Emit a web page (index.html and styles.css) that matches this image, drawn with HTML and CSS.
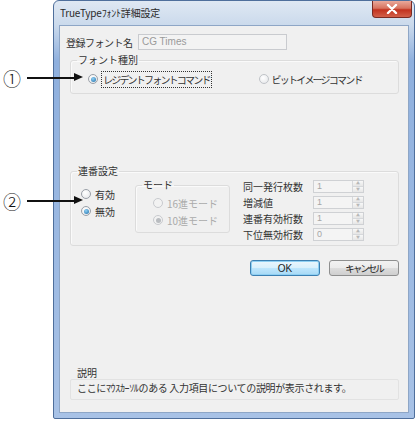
FILE: index.html
```html
<!DOCTYPE html>
<html lang="ja">
<head>
<meta charset="utf-8">
<title>TrueTypeフォント詳細設定</title>
<link rel="stylesheet" href="styles.css">
</head>
<body>
<div class="page">
  <div class="window">
    <div class="titlebar">
      <span class="title">TrueTypeﾌｫﾝﾄ詳細設定</span>
      <span class="close"><svg width="12" height="10" viewBox="0 0 12 10"><path d="M2 1 L10 9 M10 1 L2 9" stroke="#fff" stroke-width="2.4" stroke-linecap="round"/></svg></span>
    </div>
    <div class="client">
      <div class="name-row">
        <span class="lbl name-lbl">登録フォント名</span>
        <span class="textbox">CG Times</span>
      </div>

      <fieldset class="group g-type">
        <legend>フォント種別</legend>
        <div class="type-row">
          <label class="radio on"><span class="dot"></span><span class="focus kana">レジデントフォントコマンド</span></label>
          <label class="radio off dis2"><span class="dot"></span><span class="kana">ビットイメージコマンド</span></label>
        </div>
      </fieldset>

      <fieldset class="group g-serial">
        <legend>連番設定</legend>
        <div class="serial-row">
          <div class="onoff">
            <label class="radio off"><span class="dot"></span><span>有効</span></label>
            <label class="radio on"><span class="dot"></span><span>無効</span></label>
          </div>
          <fieldset class="group g-mode">
            <legend>モード</legend>
            <label class="radio dis"><span class="dot"></span><span>16進モード</span></label>
            <label class="radio dis sel"><span class="dot"></span><span>10進モード</span></label>
          </fieldset>
          <div class="params">
            <span class="plbl">同一発行枚数</span><span class="spin"><span class="val">1</span><span class="arrows"><i>▲</i><i>▼</i></span></span>
            <span class="plbl">増減値</span><span class="spin"><span class="val">1</span><span class="arrows"><i>▲</i><i>▼</i></span></span>
            <span class="plbl">連番有効桁数</span><span class="spin"><span class="val">1</span><span class="arrows"><i>▲</i><i>▼</i></span></span>
            <span class="plbl">下位無効桁数</span><span class="spin"><span class="val">0</span><span class="arrows"><i>▲</i><i>▼</i></span></span>
          </div>
        </div>
      </fieldset>

      <div class="buttons">
        <span class="btn ok">OK</span>
        <span class="btn cancel">キャンセル</span>
      </div>

      <div class="desc-lbl">説明</div>
      <div class="desc">ここにﾏｳｽｶｰｿﾙのある 入力項目についての説明が表示されます。</div>
    </div>
  </div>

  <div class="callout c1"><span class="num">①</span><span class="arrow"></span></div>
  <div class="callout c2"><span class="num">②</span><span class="arrow"></span></div>
</div>
</body>
</html>
```
FILE: styles.css
```css
* { box-sizing: border-box; }
html, body { margin: 0; padding: 0; background: #fff; }
body {
  font-family: "Noto Sans CJK JP", "Noto Sans", sans-serif;
  font-size: 10px;
  color: #333;
}
.page { position: relative; width: 418px; height: 423px; }

.window {
  margin-left: 53px;
  width: 362px;
  height: 419px;
  border: 1px solid #4f6f9c;
  border-radius: 6px 6px 2px 2px;
  background: linear-gradient(to bottom, #dfe8f3 0, #cbdaec 24px, #8fb0de 60px, #a8c2e6 100%);
  padding: 0 5px 5px 5px;
  display: flex;
  flex-direction: column;
}
.titlebar {
  height: 24px;
  display: flex;
  align-items: flex-start;
  justify-content: space-between;
  flex: none;
}
.title {
  margin-top: 5px;
  margin-left: 1px;
  font-size: 10px;
  line-height: 14px;
  color: #2a2a2a;
  letter-spacing: -0.2px;
}
.close {
  width: 40px;
  height: 17px;
  margin-right: -3px;
  border: 1px solid #7a2a22;
  border-top: none;
  border-radius: 0 0 4px 4px;
  background: linear-gradient(to bottom, #e9a99b 0, #d7735f 45%, #c2321f 55%, #d2604a 100%);
  display: flex;
  align-items: center;
  justify-content: center;
}
.client {
  flex: 1;
  background: #f0f0f0;
  border: 1px solid #8ea6c6;
  padding: 0 9px 0 6px;
  display: flex;
  flex-direction: column;
}

.name-row {
  margin-top: 8px;
  height: 16px;
  display: flex;
  align-items: center;
}
.name-lbl { width: 72px; letter-spacing: -0.5px; }
.textbox {
  width: 149px;
  height: 16px;
  border: 1px solid #c9cbcf;
  background: #f3f3f3;
  color: #9a9a9a;
  padding-left: 3px;
  line-height: 14px;
  font-family: "Liberation Sans", "Noto Sans", sans-serif;
}

.group {
  margin: 0 0 0 4px;
  border: 1px solid #dcdcdc;
  border-radius: 3px;
  padding: 0 6px 0 6px;
  min-width: 0;
  box-shadow: inset 1px 1px 0 #fafafa;
}
.group legend {
  padding: 0 1px;
  line-height: 12px;
  font-size: 10px;
}
.g-type { margin-top: 4px; height: 40px; }
.type-row { display: flex; align-items: center; margin-top: 6px; height: 14px; }
.kana { letter-spacing: -1.8px; }

.radio { display: flex; align-items: center; height: 14px; }
.dot {
  width: 10px; height: 10px;
  border-radius: 50%;
  border: 1px solid #9aa0a8;
  background: radial-gradient(circle at 40% 35%, #ffffff, #e2e4e7);
  margin-right: 4px;
  flex: none;
  display: flex; align-items: center; justify-content: center;
}
.radio.on .dot::after {
  content: "";
  width: 5px; height: 5px; border-radius: 50%;
  background: radial-gradient(circle at 40% 35%, #8fd0f5, #1f6ea8);
}
.g-type .radio.on { margin-left: 11px; }
.focus { outline: 1px dotted #333; outline-offset: 0; padding: 0 1px; }
.g-type .radio.off { margin-left: 48px; }
.g-type .radio.off .dot { margin-right: 3px; border-color: #c0c3c8; }

.g-serial { margin-top: 71px; }
.serial-row { display: flex; align-items: flex-start; padding-bottom: 4px; }
.onoff { width: 58px; margin-top: 10px; display: flex; flex-direction: column; gap: 3px; }
.onoff .radio { margin-left: 4px; }

.g-mode {
  margin: 2px 0 0 0;
  width: 95px;
  height: 54px;
  padding: 0 6px 0 6px;
}
.g-mode .radio { margin-left: 11px; color: #ababab; }
.g-mode .radio:first-of-type { margin-top: 5px; }
.g-mode .radio + .radio { margin-top: 3px; }
.radio.dis .dot { border-color: #c8cace; background: #f2f2f2; }
.radio.dis.sel .dot::after {
  content: ""; width: 5px; height: 5px; border-radius: 50%; background: #b9bcc0;
}

.params {
  margin-left: 13px;
  margin-top: 3px;
  display: grid;
  grid-template-columns: 70px 51px;
  row-gap: 3px;
  align-items: center;
}
.plbl { line-height: 13px; }
.spin {
  height: 13px;
  border: 1px solid #cfd1d4;
  background: #f4f4f4;
  display: flex;
  justify-content: space-between;
}
.val { color: #a6a6a6; padding-left: 3px; line-height: 11px; font-family: "Liberation Sans", sans-serif; font-size: 9px; }
.arrows {
  width: 11px;
  border-left: 1px solid #d6d8db;
  display: flex; flex-direction: column;
}
.arrows i {
  flex: 1; font-style: normal; font-size: 4px; line-height: 5px;
  color: #b8b8b8; text-align: center;
  background: linear-gradient(#f8f8f8, #e6e6e6);
}
.arrows i + i { border-top: 1px solid #d6d8db; }

.buttons {
  margin-top: 14px;
  display: flex;
  justify-content: flex-end;
  gap: 9px;
}
.btn {
  width: 70px;
  height: 16px;
  border-radius: 3px;
  display: flex; align-items: center; justify-content: center;
  font-size: 10px;
  color: #222;
}
.ok {
  border: 1px solid #3c7fb1;
  background: linear-gradient(to bottom, #eaf6fd 0, #d9f0fc 50%, #bee6fd 51%, #a7d9f5 100%);
  box-shadow: inset 0 0 0 1px #8fd0f3;
  font-family: "Liberation Sans", sans-serif;
}
.cancel {
  border: 1px solid #8e8f8f;
  background: linear-gradient(to bottom, #f2f2f2 0, #ebebeb 50%, #dddddd 51%, #cfcfcf 100%);
  letter-spacing: -2px;
  font-size: 9.5px;
}

.desc-lbl { margin-top: 91px; margin-left: 11px; line-height: 12px; }
.desc {
  margin: 0 0 0 4px;
  height: 21px;
  border: 1px solid #e2e2e2;
  border-radius: 2px;
  padding: 2px 0 0 6px;
  line-height: 12px;
  letter-spacing: -0.35px;
  white-space: nowrap;
}

.callout {
  position: absolute;
  left: 3px;
  display: flex;
  align-items: center;
  height: 20px;
}
.c1 { top: 68px; }
.c2 { top: 191px; }
.num { font-size: 18px; line-height: 20px; width: 21px; font-family: "Noto Sans CJK JP", sans-serif; font-weight: 300; color: #111; }
.arrow {
  position: relative;
  margin-left: 3px;
  width: 48px;
  height: 1.2px;
  background: #111;
}
.arrow::after {
  content: "";
  position: absolute;
  right: -8px;
  top: -4px;
  border-left: 9px solid #111;
  border-top: 4.6px solid transparent;
  border-bottom: 4.6px solid transparent;
}
```
